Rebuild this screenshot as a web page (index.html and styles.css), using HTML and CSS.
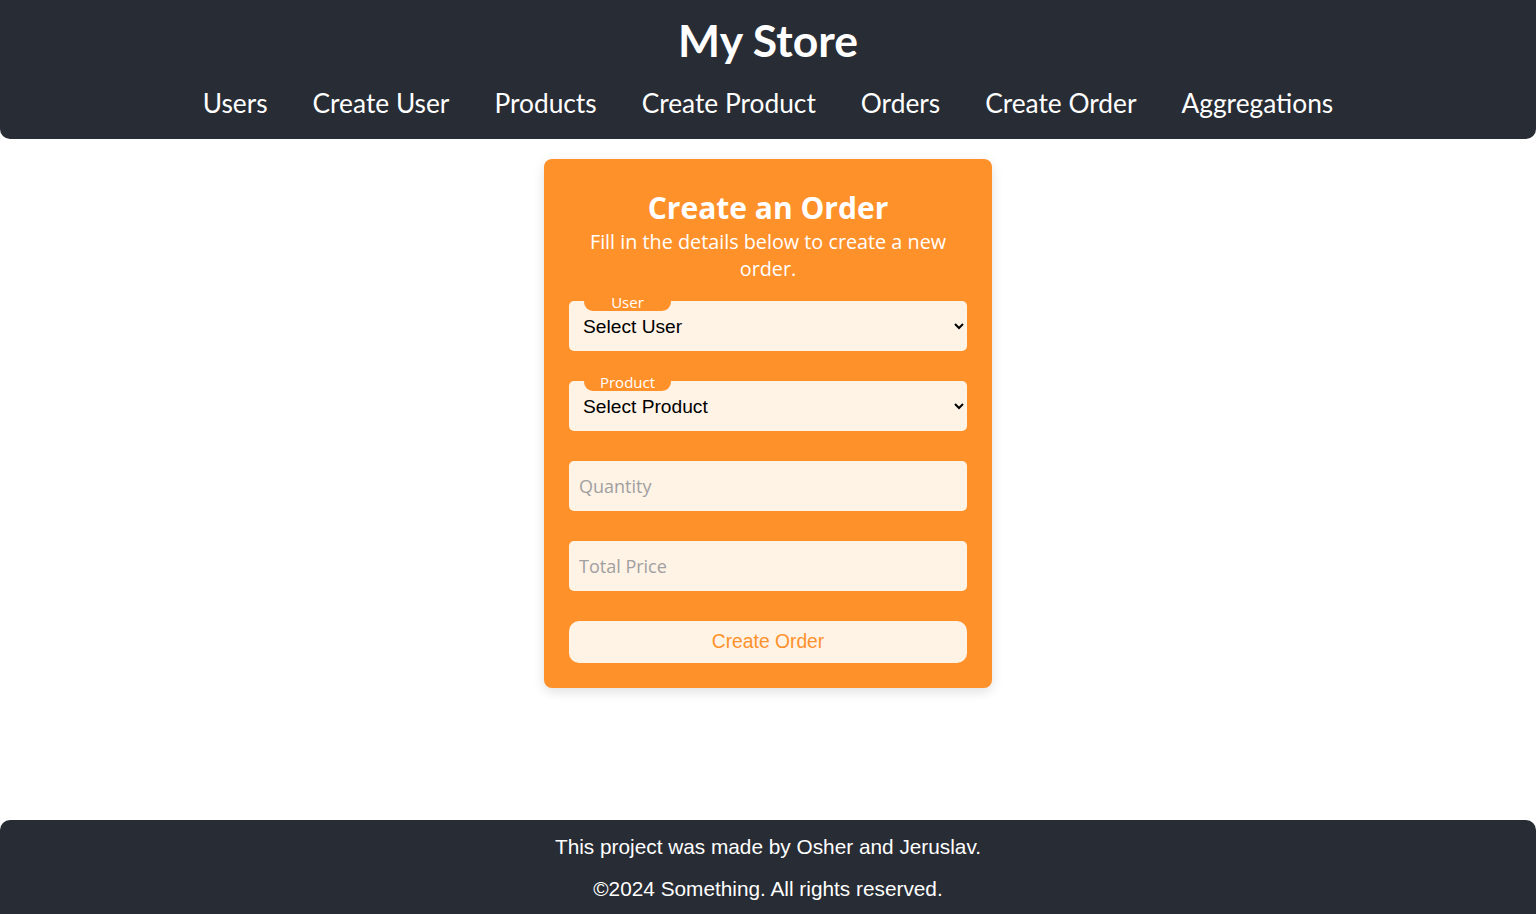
FILE: index.html
```html
<!DOCTYPE html>
<html lang="en">
<head>
<meta charset="utf-8">
<title>My Store</title>
<link rel="stylesheet" href="styles.css">
</head>
<body>
<header class="site-header">
  <h1 class="site-title">My Store</h1>
  <nav class="site-nav">
    <a href="#">Users</a>
    <a href="#">Create User</a>
    <a href="#">Products</a>
    <a href="#">Create Product</a>
    <a href="#">Orders</a>
    <a href="#">Create Order</a>
    <a href="#">Aggregations</a>
  </nav>
</header>
<main class="main">
  <form class="card">
    <h2 class="card-title">Create an Order</h2>
    <p class="card-sub">Fill in the details below to create a new order.</p>
    <div class="field">
      <span class="tab">User</span>
      <select class="control select"><option>Select User</option></select>
    </div>
    <div class="field">
      <span class="tab">Product</span>
      <select class="control select"><option>Select Product</option></select>
    </div>
    <div class="field">
      <input class="control input" type="number" placeholder="Quantity">
    </div>
    <div class="field">
      <input class="control input" type="number" placeholder="Total Price">
    </div>
    <button class="submit" type="button">Create Order</button>
  </form>
</main>
<footer class="site-footer">
  <p>This project was made by Osher and Jeruslav.</p>
  <p>&copy;2024 Something. All rights reserved.</p>
</footer>
</body>
</html>
```
FILE: styles.css
```css
html, body { margin: 0; padding: 0; }
body {
  min-height: 100vh;
  display: flex;
  flex-direction: column;
  background: #ffffff;
  font-family: "Open Sans", sans-serif;
}
.site-header {
  background: #282c34;
  color: #fff;
  border-radius: 0 0 10px 10px;
  height: 139px;
  box-sizing: border-box;
  padding-top: 14px;
  text-align: center;
  font-family: Lato, sans-serif;
}
.site-title {
  margin: 0;
  font-size: 44.5px;
  font-weight: 700;
  line-height: 52px;
}
.site-nav {
  display: flex;
  justify-content: center;
  gap: 45px;
  margin-top: 21px;
}
.site-nav a {
  color: #fff;
  text-decoration: none;
  font-size: 26.3px;
  line-height: 32px;
}
.main {
  flex: 1;
  display: flex;
  justify-content: center;
  align-items: flex-start;
  padding-top: 20px;
}
.card {
  width: 448px;
  box-sizing: border-box;
  background: #ff912b;
  border-radius: 8px;
  padding: 29px 25px 25px;
  box-shadow: 0 4px 12px rgba(0,0,0,0.12);
  display: flex;
  flex-direction: column;
  color: #fff;
}
.card-title {
  margin: 0;
  text-align: center;
  font-size: 30px;
  line-height: 40px;
  font-weight: 700;
}
.card-sub {
  margin: 0 0 19px;
  text-align: center;
  font-size: 19.8px;
  line-height: 27px;
}
.field {
  position: relative;
  margin-bottom: 30px;
}
.tab {
  position: absolute;
  left: 15px;
  top: -8px;
  width: 87px;
  height: 18px;
  background: #ff912b;
  color: #fff;
  border-radius: 9px;
  font-size: 15px;
  line-height: 18px;
  text-align: center;
  z-index: 1;
}
.control {
  display: block;
  width: 100%;
  height: 50px;
  box-sizing: border-box;
  border: none;
  border-radius: 5px;
  background: #fff3e6;
  padding: 0 10px;
  font-size: 19.2px;
  outline: none;
}
.select {
  font-family: "Liberation Sans", Arial, sans-serif;
  color: #000;
}
.input {
  font-family: "Open Sans", sans-serif;
  font-size: 18px;
  color: #000;
}
.input::placeholder { color: #a0a0a0; }
.submit {
  height: 42px;
  border: none;
  border-radius: 10px;
  background: #fff3e6;
  color: #ff912b;
  font-family: "Liberation Sans", Arial, sans-serif;
  font-size: 19.3px;
}
.site-footer {
  background: #282c34;
  color: #fff;
  border-radius: 10px 10px 0 0;
  height: 94px;
  box-sizing: border-box;
  padding-top: 15px;
  text-align: center;
  font-family: "Liberation Sans", Arial, sans-serif;
  font-size: 20.8px;
  line-height: 23px;
}
.site-footer p { margin: 0 0 19px; }
```
